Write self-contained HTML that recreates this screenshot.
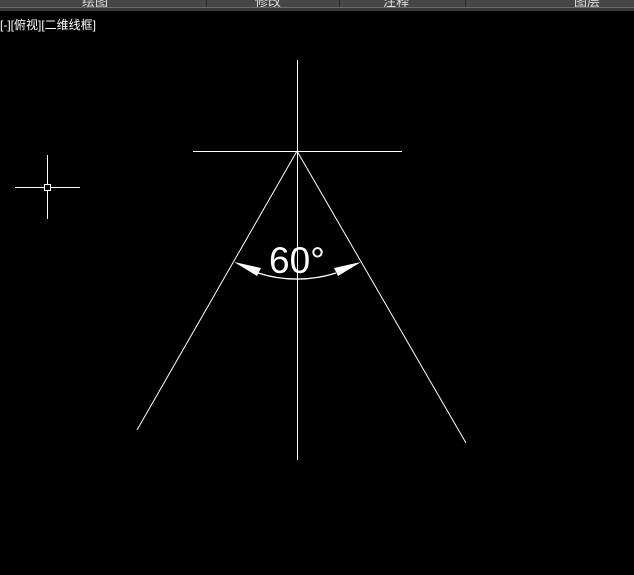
<!DOCTYPE html><html><head><meta charset="utf-8"><style>
body{margin:0;width:634px;height:575px;background:#000;overflow:hidden;position:relative;font-family:"Liberation Sans","Noto Sans CJK SC",sans-serif}
.bar{position:absolute;left:0;top:0;width:634px;height:7px;background:#464646;overflow:hidden}
.bar span{position:absolute;top:-9px;color:#ddd;font-size:13px}
.sep{position:absolute;top:0;width:1px;height:7px;background:#2a2a2a}
.l1{position:absolute;top:7px;left:0;width:634px;height:1px;background:#6a6a6a}
.l2{position:absolute;top:8px;left:0;width:634px;height:3px;background:#3a3a3a}
.vt{position:absolute;left:0;top:16px;color:#fff;font-size:12px;white-space:nowrap}
</style></head><body>
<div class="bar"><span style="left:82px">绘图</span><span style="left:255px">修改</span><span style="left:383px">注释</span><span style="left:574px">图层</span>
<div class="sep" style="left:206px"></div><div class="sep" style="left:339px"></div><div class="sep" style="left:465px"></div></div>
<div class="l1"></div><div class="l2"></div>
<div class="vt">[-][俯视][二维线框]</div>
<svg width="634" height="575" style="position:absolute;left:0;top:0">
<g stroke="#fff" stroke-width="1" fill="none">
<line x1="297.5" y1="60" x2="297.5" y2="460"/>
<line x1="193" y1="151.5" x2="402" y2="151.5"/>
<line x1="297" y1="151" x2="137" y2="430"/>
<line x1="297" y1="151" x2="466" y2="443"/>
<path d="M258 273 A128 128 0 0 0 336 273" stroke-width="1.3"/>
<line x1="15" y1="187.5" x2="80" y2="187.5"/>
<line x1="47.5" y1="155" x2="47.5" y2="219"/>
<rect x="44.5" y="184.5" width="6" height="6" fill="#000"/>
</g>
<polygon points="234,262 261,268 257,276" fill="#fff"/>
<polygon points="361,262 334,268 338,276" fill="#fff"/>
<text x="297" y="273" fill="#fff" font-size="37" text-anchor="middle" font-family="Liberation Sans">60°</text>
</svg>
</body></html>
